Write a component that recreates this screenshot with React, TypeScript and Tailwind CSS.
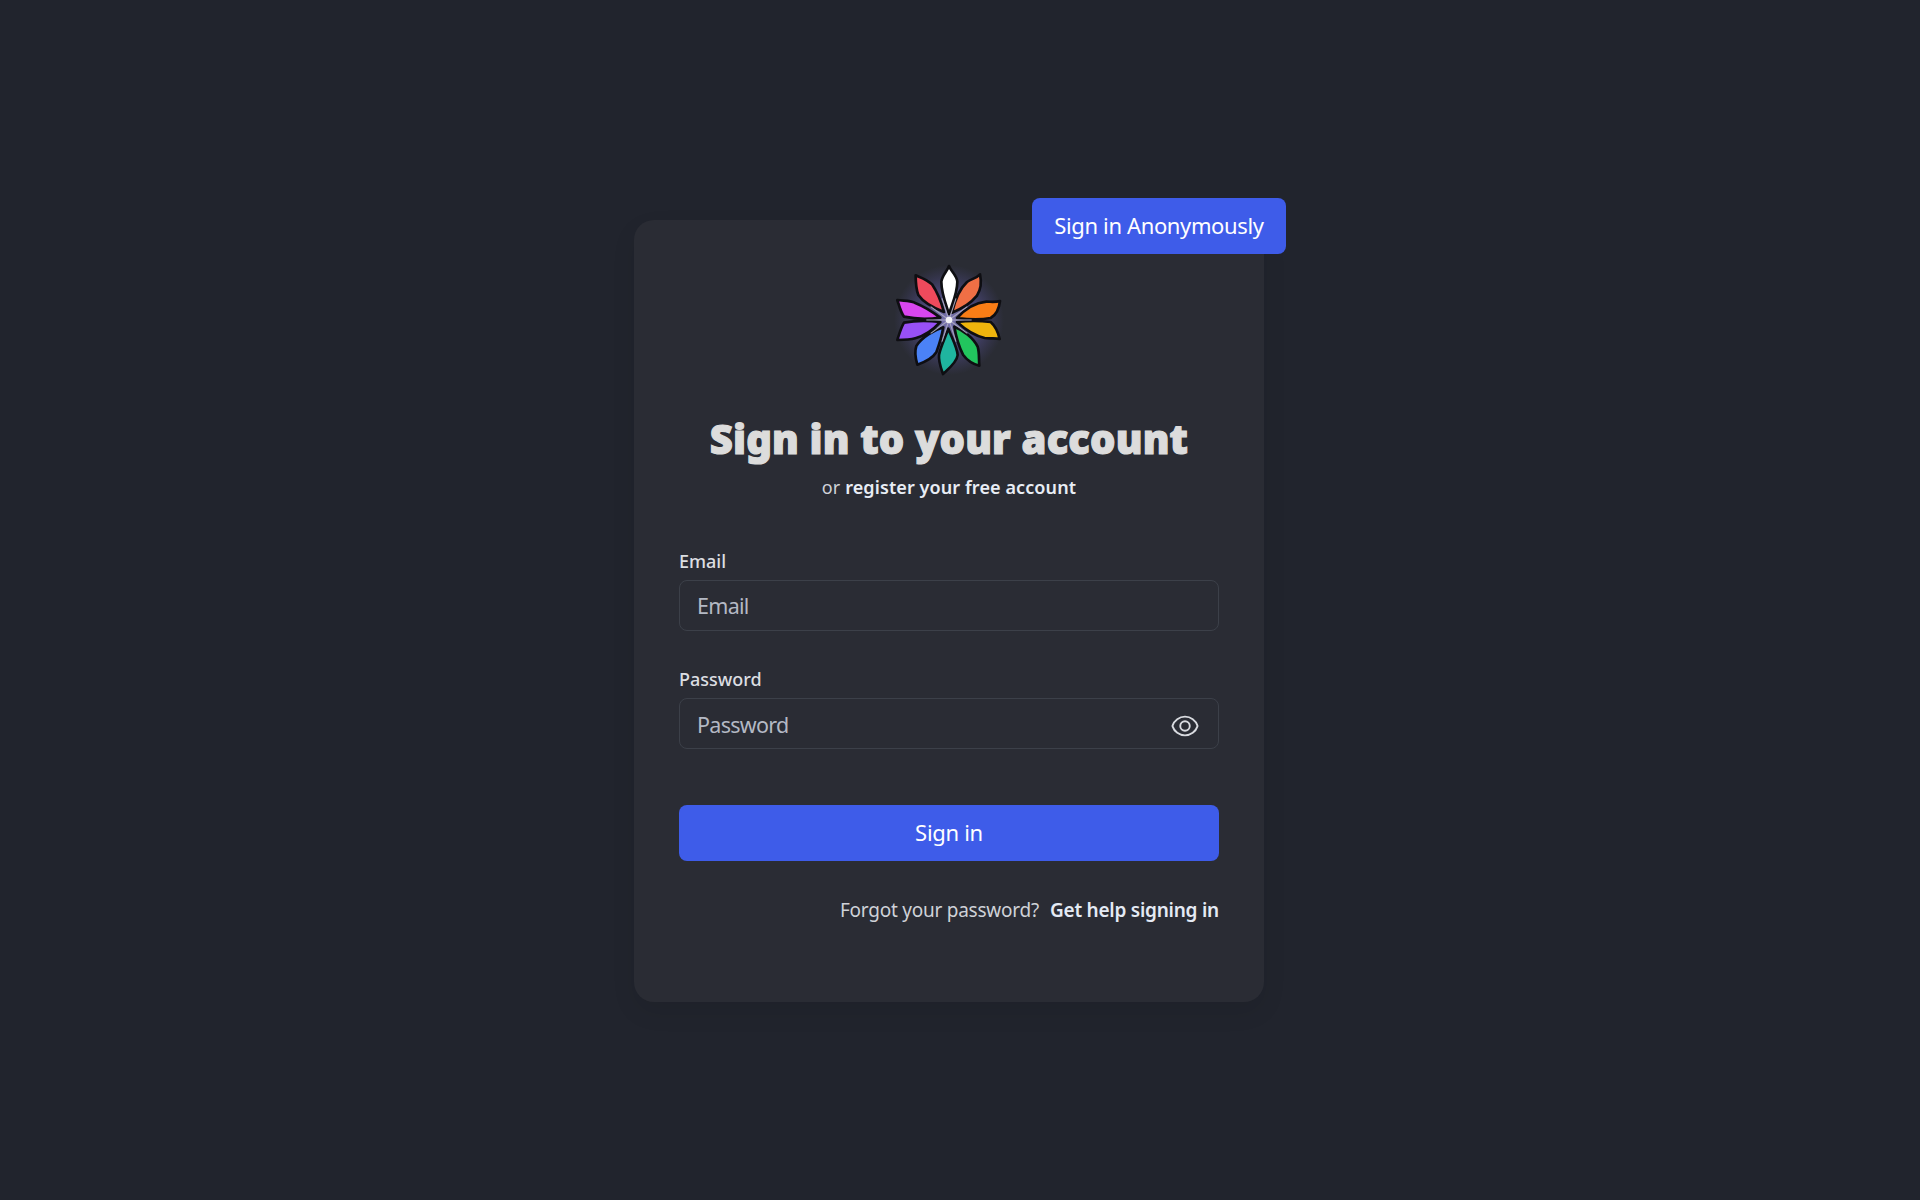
const font = 'font-["Noto_Sans",sans-serif]';

const petals = [
  { fill: '#ffffff', d: 'M268 222C258 190 245 160 245 125C248 105 262 95 268 78C274 95 291 105 293 125C293 160 278 190 268 222Z' },
  { fill: '#ef6f45', d: 'M277 218C284 188 296 150 322 126C336 116 350 115 361 103C366 125 364 147 352 167C332 192 302 208 277 218Z' },
  { fill: '#f97d16', d: 'M292 234C318 205 350 188 380 185C395 185 408 187 421 183C419 200 411 224 393 234C360 240 325 238 292 234Z' },
  { fill: '#eeb40d', d: 'M292 246C325 242 360 242 393 246C407 258 416 280 420 297C405 293 390 297 375 294C345 287 318 270 292 246Z' },
  { fill: '#22c55e', d: 'M284 260C310 270 342 295 354 320C360 340 357 360 359 377C340 372 323 362 310 344C297 318 289 290 284 260Z' },
  { fill: '#1fb59f', d: 'M266 266C277 295 292 320 294 345C292 367 266 387 250 402C244 385 236 365 238 345C243 320 256 295 266 266Z' },
  { fill: '#4b82f6', d: 'M251 262C225 270 188 290 170 318C164 335 168 357 173 374C195 367 217 357 230 337C240 310 247 285 251 262Z' },
  { fill: '#9850f5', d: 'M242 246C210 242 165 242 133 248C123 265 118 285 113 300C135 300 150 300 167 295C197 287 222 268 242 246Z' },
  { fill: '#d946ef', d: 'M242 233C216 213 190 198 165 188C150 180 130 183 113 180C118 195 123 217 133 230C165 237 208 238 242 233Z' },
  { fill: '#ee4a5c', d: 'M253 216C225 205 193 190 176 165C168 145 168 125 168 106C185 113 202 118 217 133C232 155 246 190 253 216Z' },
];

const rays = [18, 54, 90, 126, 162, 198, 234, 270, 306, 342];

function Logo() {
  return (
    <svg viewBox="94 66 348 348" className="w-[116px] h-[116px]">
      <defs>
        <radialGradient id="glow">
          <stop offset="0%" stopColor="#8a84c8" stopOpacity="0.9" />
          <stop offset="55%" stopColor="#5a5498" stopOpacity="0.6" />
          <stop offset="100%" stopColor="#4a4680" stopOpacity="0" />
        </radialGradient>
      </defs>
      <circle cx="268" cy="240" r="165" fill="url(#glow)" />
      {petals.map((p) => (
        <path key={p.fill} d={p.d} fill={p.fill} stroke="#0e0e12" strokeWidth="8" strokeLinejoin="round" />
      ))}
      {rays.map((a) => (
        <line key={a} x1="268" y1="240" x2="268" y2="172" transform={`rotate(${a} 268 240)`} stroke="#a9a7bd" strokeWidth="3" />
      ))}
      <circle cx="268" cy="240" r="10" fill="#f2f2f6" />
    </svg>
  );
}

function EyeIcon() {
  return (
    <svg viewBox="0 0 24 24" fill="none" stroke="#d9dbe0" strokeWidth="1.5" className="w-[30px] h-[30px]">
      <path d="M2.036 12.322a1.012 1.012 0 0 1 0-.639C3.423 7.51 7.36 4.5 12 4.5c4.638 0 8.573 3.007 9.963 7.178.07.207.07.431 0 .639C20.577 16.49 16.64 19.5 12 19.5c-4.638 0-8.573-3.007-9.963-7.178Z" />
      <circle cx="12" cy="12" r="3.8" />
    </svg>
  );
}

export default function App() {
  return (
    <div className={`min-h-screen bg-[#21242d] flex justify-center pt-[220px] pr-[22px] ${font}`}>
      <div className="relative w-[630px] h-[782px] bg-[#2a2c34] rounded-[20px] shadow-[0_10px_24px_rgba(0,0,0,0.08)] px-[45px] pt-[42px] flex flex-col">
        <button className="absolute right-[-22px] top-[-22px] w-[254px] h-[56px] pb-[2px] bg-[#3e5ce9] rounded-[8px] text-white text-[22px] tracking-[-0.37px]">
          Sign in Anonymously
        </button>

        <div className="flex justify-center">
          <Logo />
        </div>

        <h1 className="mt-[35px] text-center text-[40px] leading-[52px] font-black text-[#dcdcdc] whitespace-nowrap tracking-[0.15px] [-webkit-text-stroke:1.2px_#dcdcdc]">
          Sign in to your account
        </h1>
        <p className="mt-[9px] text-center text-[18px] leading-[26px] text-[#cfd2d8] tracking-[0.1px]">
          or <span className="font-semibold text-[#e8edf5]">register your free account</span>
        </p>

        <label className="mt-[48px] text-[18px] leading-[26px] font-medium text-[#dcdee2]">Email</label>
        <input
          placeholder="Email"
          className="mt-[6px] h-[51px] w-full rounded-[8px] border border-[#3c4049] bg-transparent px-[17px] text-[21.5px] tracking-[-0.7px] placeholder:text-[#b4b9c4] outline-none"
        />

        <label className="mt-[35px] text-[18px] leading-[26px] font-medium text-[#dcdee2]">Password</label>
        <div className="relative mt-[6px]">
          <input
            placeholder="Password"
            className="h-[51px] w-full rounded-[8px] border border-[#3c4049] bg-transparent px-[17px] pt-[1px] text-[21.5px] tracking-[-0.7px] placeholder:text-[#b4b9c4] outline-none"
          />
          <span className="absolute right-[19px] top-[13px]">
            <EyeIcon />
          </span>
        </div>

        <button className="mt-[56px] h-[56px] w-full pb-[2px] rounded-[8px] bg-[#3e5ce9] text-white text-[22px] tracking-[-0.3px]">
          Sign in
        </button>

        <p className="mt-[36px] text-right text-[19px] leading-[26px] text-[#cfd2d8] tracking-[-0.24px]">
          Forgot your password?
          <span className="ml-[11px] font-semibold text-[#e4eaf4]">Get help signing in</span>
        </p>
      </div>
    </div>
  );
}
